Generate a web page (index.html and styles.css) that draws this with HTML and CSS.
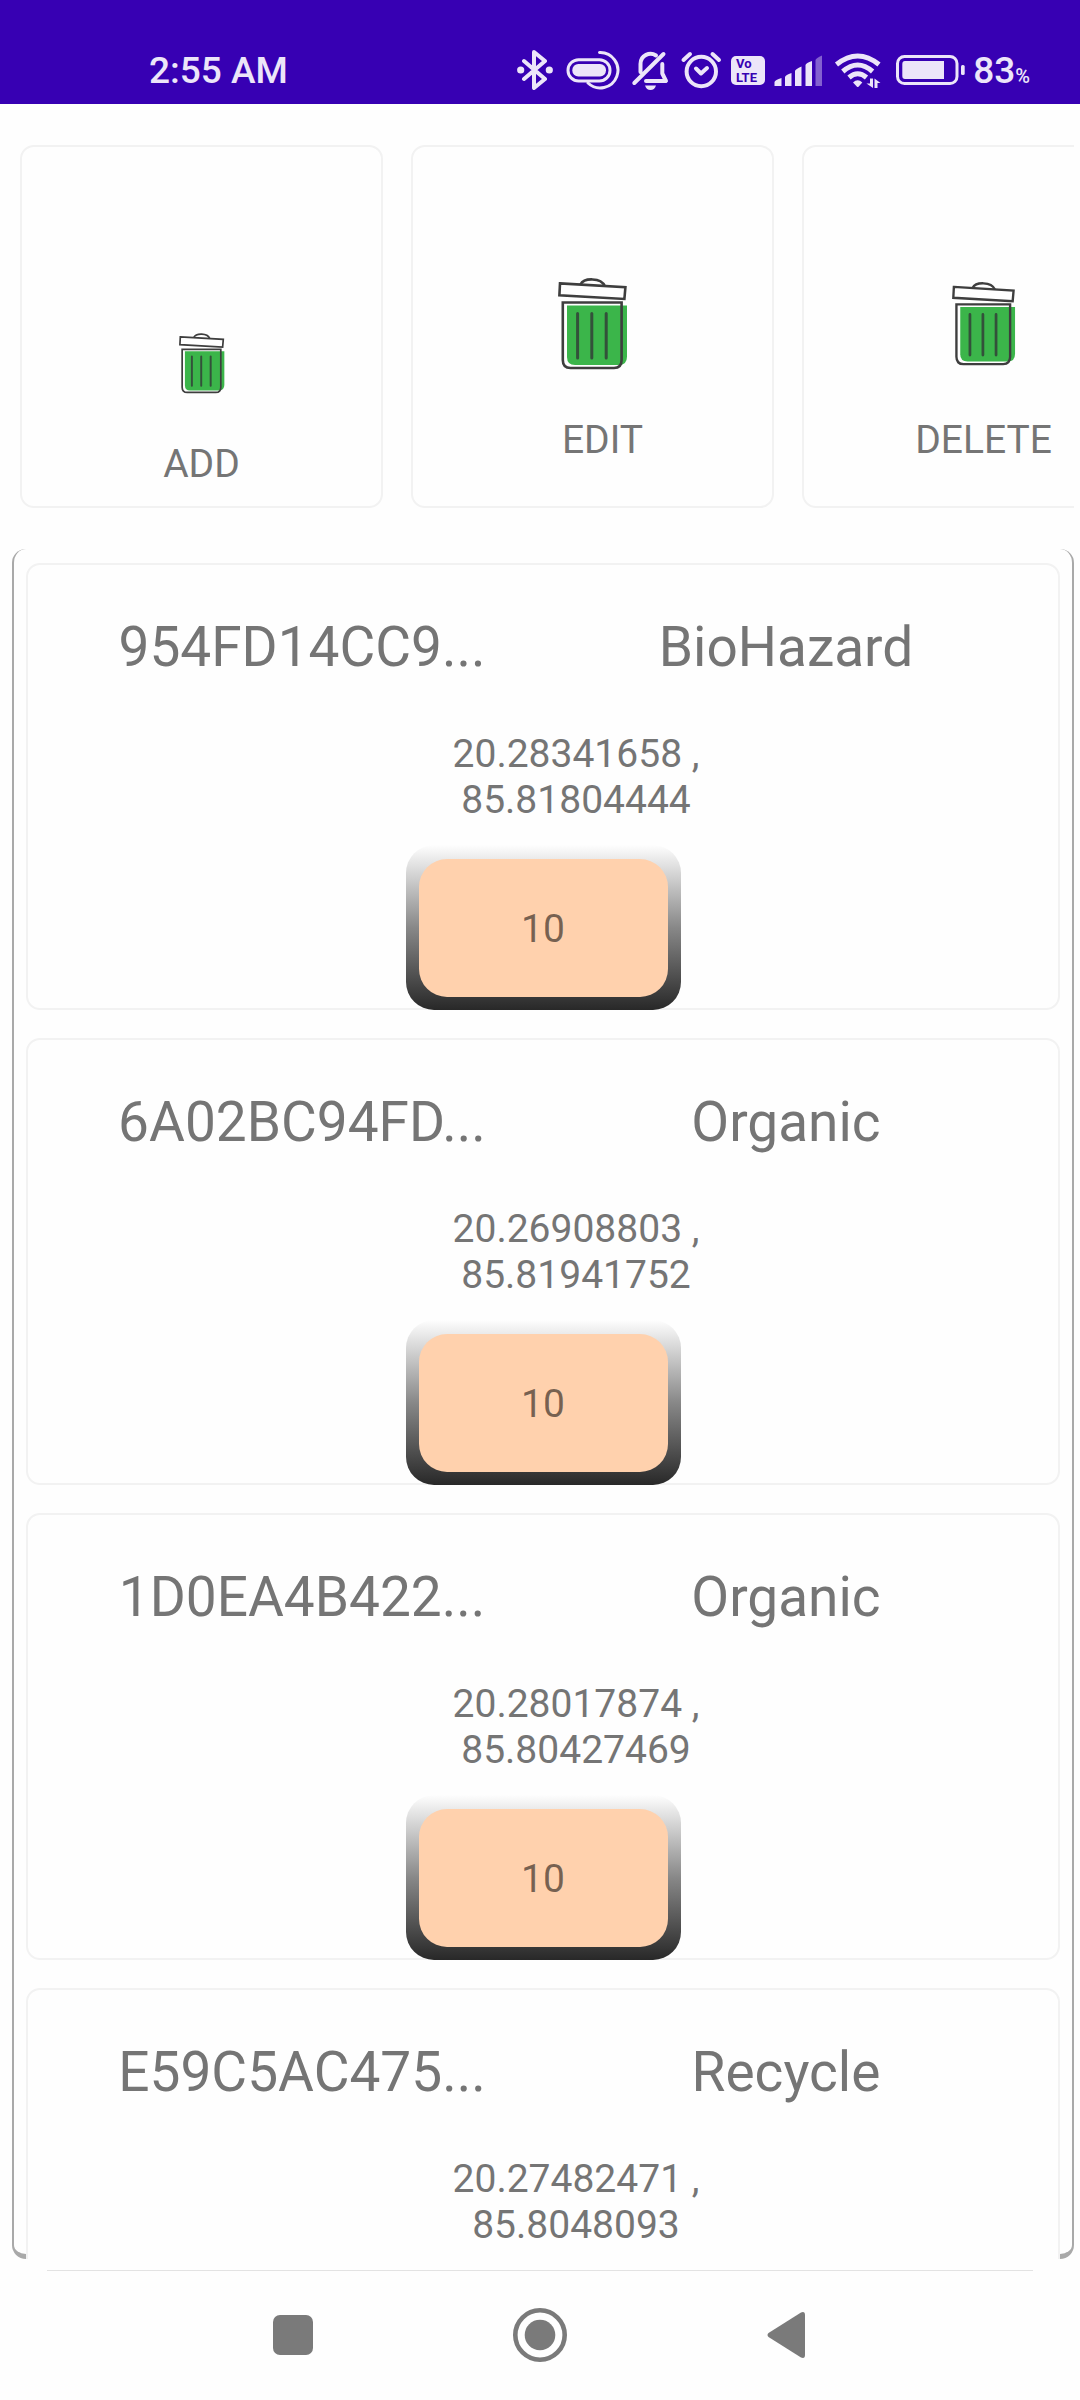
FILE: index.html
```html
<!DOCTYPE html>
<html lang="en">
<head>
<meta charset="utf-8">
<meta name="viewport" content="width=device-width, initial-scale=1">
<title>Bins</title>
<link rel="stylesheet" href="styles.css">
</head>
<body>
<svg class="sprite" aria-hidden="true">
  <symbol id="bin" viewBox="0 0 70 92">
    <path d="M9 27.5H69V78.5Q69 87 61 87H17Q9 87 9 79Z" fill="#3bb54a"/>
    <g fill="none" stroke="#3e3e3e" stroke-width="2.6">
      <path d="M4.8 24.5H63.6V82Q63.6 90 56 90H12.500Q4.800 90 4.800 82Z"/>
      <path d="M2 5.400L67.400 9.300L66.400 21L1.400 17.300Z"/>
      <path d="M22.400 6.500C26 -.5 43 -.5 46.800 8"/>
      <path d="M19.600 35.500V80M33.800 35.500V80M48.200 35.500V80" stroke="#33513a" stroke-width="3" stroke-linecap="round"/>
    </g>
  </symbol>
</svg>

<header class="status">
  <time class="status-time">2:55 AM</time>
  <div class="status-icons">
    <svg width="38" height="40" viewBox="0 0 38 40" aria-label="Bluetooth">
      <path class="line" d="M7 11L28 29L17 38V2L28 11L7 29"/>
      <circle cx="3.700" cy="20" r="3.600"/><circle cx="32.300" cy="20" r="3.600"/>
    </svg>
    <svg width="58" height="40" viewBox="0 0 58 40" aria-label="Vibration">
      <rect class="line thin" x="5" y="9.700" width="42" height="21.300" rx="10.600"/>
      <rect x="9.300" y="14" width="33.700" height="12.500" rx="6"/>
      <path class="line thin" d="M36.500 2.500A17.700 17.700 0 1 1 25 33"/>
    </svg>
    <svg width="41" height="40" viewBox="0 0 41 40" aria-label="Muted">
      <path class="line" d="M27 5.500C21 1.500 11.500 5 11.500 14V22M33.300 14V23.500L37 31H17M5.300 33L34.500 4"/>
      <path d="M16 35.500H27Q25.500 40 21.500 40T16 35.500Z"/>
    </svg>
    <svg width="44" height="40" viewBox="0 0 44 40" aria-label="Alarm">
      <circle class="line" cx="23.300" cy="21.500" r="14.700"/>
      <path class="line" d="M18 18.500L23 23.500L29 18M5.500 10L12 4M34.500 4L41 10"/>
    </svg>
    <svg width="36" height="40" viewBox="0 0 36 40" aria-label="VoLTE">
      <rect x="1" y="6" width="34" height="29" rx="5"/>
      <text class="volte" x="6" y="18">Vo</text>
      <text class="volte" x="6" y="32">LTE</text>
    </svg>
    <svg width="50" height="40" viewBox="0 0 50 40" aria-label="Signal">
      <path d="M.5 36V32Q1 30 7.500 28V36ZM11 36V27Q11.500 25 17.500 23V36ZM21 36V21Q21.500 19 27.500 16.500V36ZM31.500 36V15Q32 13 38 11V36Z"/>
      <path d="M41.500 36V10Q42 8 48 5.500V36Z" opacity=".42"/>
    </svg>
    <svg width="53" height="40" viewBox="0 0 53 40" aria-label="Wi-Fi">
      <path class="line arc" d="M4.500 14.500Q25.700 -2.500 47 14.500M10.800 21.500Q25.700 8.500 40.600 21.500M17 27.500Q25.700 20 34.500 27.500"/>
      <path d="M21 32.500Q25.700 28 30.300 32.500L26.500 36.700Q25.700 37.300 25 36.700Z"/>
      <path d="M38 28.500H41V38L34.500 33.500H38ZM42.500 38V28.500L48.500 33H45.500V38Z"/>
    </svg>
    <svg width="72" height="40" viewBox="0 0 72 40" aria-label="Battery">
      <rect class="line thin" x="4.500" y="6.500" width="59.500" height="27" rx="7"/>
      <path d="M12 11H51V29H12Q9.300 29 9.300 26V14Q9.300 11 12 11Z"/>
      <rect x="68" y="15" width="3.700" height="10" rx="1.500"/>
    </svg>
    <span class="battery-level">83<small>%</small></span>
  </div>
</header>

<nav class="actions" aria-label="Bin actions">
  <button class="action action-add" type="button"><svg class="bin bin-small"><use href="#bin"/></svg><span>ADD</span></button>
  <button class="action action-edit" type="button"><svg class="bin bin-large"><use href="#bin"/></svg><span>EDIT</span></button>
  <button class="action action-delete" type="button"><svg class="bin bin-medium"><use href="#bin"/></svg><span>DELETE</span></button>
</nav>

<main class="panel">
  <ul class="bins">
    <li class="bin-card">
      <div class="bin-head"><span>954FD14CC9...</span><span>BioHazard</span></div>
      <p class="coords">20.28341658 ,<br>85.81804444</p>
      <div class="level"><span>10</span></div>
    </li>
    <li class="bin-card">
      <div class="bin-head"><span>6A02BC94FD...</span><span>Organic</span></div>
      <p class="coords">20.26908803 ,<br>85.81941752</p>
      <div class="level"><span>10</span></div>
    </li>
    <li class="bin-card">
      <div class="bin-head"><span>1D0EA4B422...</span><span>Organic</span></div>
      <p class="coords">20.28017874 ,<br>85.80427469</p>
      <div class="level"><span>10</span></div>
    </li>
    <li class="bin-card">
      <div class="bin-head"><span>E59C5AC475...</span><span>Recycle</span></div>
      <p class="coords">20.27482471 ,<br>85.8048093</p>
    </li>
  </ul>
</main>

<footer class="system-nav">
  <button type="button" aria-label="Recent apps"><svg width="56" height="56" viewBox="0 0 56 56"><rect x="8" y="8" width="40" height="40" rx="7"/></svg></button>
  <button type="button" aria-label="Home"><svg width="56" height="56" viewBox="0 0 56 56"><circle cx="28" cy="28" r="24.700" fill="none" stroke="#7a7a7a" stroke-width="4.600"/><circle cx="28" cy="28" r="15.300"/></svg></button>
  <button type="button" aria-label="Back"><svg width="56" height="56" viewBox="0 0 56 56"><path d="M9.500 26L42 5.500Q46 4 46 8V48Q46 52 42 50.500L9.500 30Q7.500 28 9.500 26Z"/></svg></button>
</footer>
</body>
</html>
```
FILE: styles.css
```css
* {
  box-sizing: border-box;
}

body {
  margin: 0;
  height: 100vh;
  display: flex;
  flex-direction: column;
  overflow: hidden;
  background: #fefefe;
  color: #757575;
  font-family: Roboto, "Liberation Sans", sans-serif;
  font-size: 39px;
  line-height: 46px;
}

button {
  margin: 0;
  padding: 0;
  border: 0;
  background: none;
  color: inherit;
  font: inherit;
}

svg {
  display: block;
}

.sprite {
  position: absolute;
  width: 0;
  height: 0;
}

/* Status bar */
.status {
  flex: none;
  height: 104px;
  padding: 36px 50px 0 149px;
  display: flex;
  align-items: center;
  justify-content: space-between;
  background: #3700b3;
  color: #ece5f9;
  font-size: 37px;
  font-weight: 500;
}

.status-time,
.battery-level {
  padding-top: 2px;
}

.status-icons {
  display: flex;
  align-items: center;
  gap: 8px;
  fill: #ece5f9;
}

.line {
  fill: none;
  stroke: #ece5f9;
  stroke-width: 4;
  stroke-linecap: round;
  stroke-linejoin: round;
}

.thin {
  stroke-width: 3;
}

.arc {
  stroke-width: 5;
  stroke-linecap: butt;
}

.volte {
  fill: #3700b3;
  font-size: 13px;
  font-weight: 700;
}

.battery-level small {
  font-size: 20px;
  line-height: 20px;
}

/* Action cards */
.actions {
  flex: none;
  margin: 0 6px;
  padding: 41px 0 41px 14px;
  display: flex;
  gap: 28px;
  overflow: hidden;
}

.action {
  flex: none;
  width: 363px;
  height: 363px;
  padding-bottom: 43px;
  display: flex;
  flex-direction: column;
  align-items: center;
  justify-content: flex-end;
  gap: 47px;
  border: 2px solid #f2f2f2;
  border-radius: 14px;
}

.action-add {
  padding-bottom: 19px;
}

.action-edit span {
  padding-left: 20px;
}

.action-delete {
  gap: 51px;
}

.bin-small {
  width: 46px;
  height: 61px;
}

.bin-medium {
  width: 64px;
  height: 84px;
}

.bin-large {
  width: 70px;
  height: 92px;
}

/* Bin list */
.panel {
  flex: 1;
  min-height: 0;
  margin: 0 6px 11px 12px;
  padding: 0 12px;
  display: flex;
  border: 2px solid #a9a9a9;
  border-width: 0 2px 5px;
  border-radius: 14px;
}

.bins {
  flex: 1;
  min-width: 0;
  margin: 0 0 -5px;
  padding: 14px 0 0;
  display: flex;
  flex-direction: column;
  gap: 28px;
  overflow: hidden;
  background: #fefefe;
  list-style: none;
}

.bin-card {
  flex: none;
  min-height: 447px;
  padding-top: 50px;
  display: flex;
  flex-direction: column;
  align-items: center;
  border: 2px solid #f2f2f2;
  border-radius: 14px;
}

.bin-head {
  align-self: stretch;
  padding: 0 30px 0 32px;
  display: grid;
  grid-template-columns: 1fr 1fr;
  font-size: 55px;
  line-height: 65px;
  text-align: center;
}

.coords {
  margin: 51px 0 22px;
  padding-left: 66px;
  text-align: center;
}

/* The level badge sits over the card's bottom border */
.level {
  width: 275px;
  height: 165px;
  margin-bottom: -2px;
  padding: 14px 13px 13px;
  display: grid;
  border-radius: 28px;
  background: linear-gradient(#fefefe, #888 50%, #282828);
}

.level span {
  padding-top: 2px;
  display: grid;
  place-items: center;
  border-radius: 28px;
  background: #ffd1ad;
  color: rgba(0, 0, 0, 0.54);
}

/* System navigation */
.system-nav {
  flex: none;
  height: 130px;
  margin: 0 47px;
  padding: 0 123px 2px;
  display: grid;
  grid-template-columns: repeat(3, 1fr);
  place-items: center;
  border-top: 1px solid #e3e3e3;
  fill: #7a7a7a;
}
```
